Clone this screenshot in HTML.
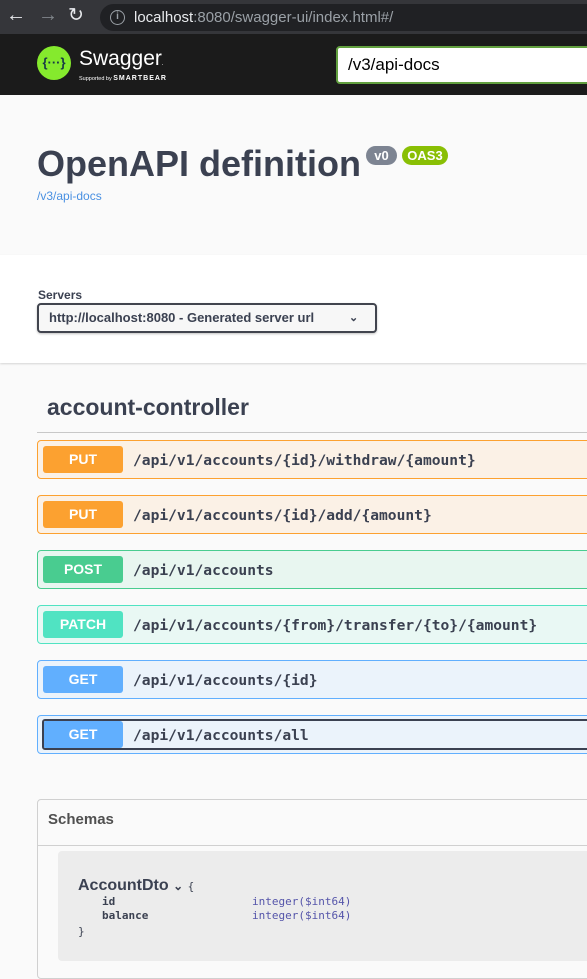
<!DOCTYPE html>
<html><head><meta charset="utf-8"><style>
*{box-sizing:border-box;margin:0;padding:0}
body{width:587px;height:963px;overflow:hidden;background:#fafafa;font-family:"Liberation Sans",sans-serif;position:relative}
.abs{position:absolute}
.chrome{left:0;top:0;width:587px;height:34px;background:#35363a}
.url{left:100px;top:4px;width:500px;height:27px;border-radius:14px;background:#202124;color:#9aa0a6;font-size:15px;line-height:27px;padding-left:34px}
.url b{color:#e8eaed;font-weight:normal}
.top{left:0;top:34px;width:587px;height:61px;background:#1b1b1b}
.info{left:0;top:95px;width:587px;height:160px;background:#fafafa}
.servers{left:0;top:255px;width:587px;height:108px;background:#fff;box-shadow:0 1px 2px rgba(0,0,0,.15)}
.op{position:absolute;left:37px;width:560px;height:39px;border:1px solid;border-radius:4px}
.op .m{position:absolute;left:5px;top:5px;width:80px;height:27px;border-radius:3px;color:#fff;font-weight:bold;font-size:14px;text-align:center;line-height:27px}
.op .p{position:absolute;left:95px;top:1px;line-height:37px;font-family:"DejaVu Sans Mono","Liberation Mono",monospace;font-weight:bold;font-size:14.6px;color:#3b4151}
.put{border-color:#fca130;background:#fbf1e6}.put .m{background:#fca130}
.post{border-color:#49cc90;background:#e8f6f0}.post .m{background:#49cc90}
.patch{border-color:#50e3c2;background:#e9f8f4}.patch .m{background:#50e3c2}
.get{border-color:#61affe;background:#ebf3fb}.get .m{background:#61affe}
.mono{font-family:"DejaVu Sans Mono","Liberation Mono",monospace;font-size:11px;color:#3b4151}
</style></head><body>
<div class="abs chrome"></div>
<div class="abs" style="left:6px;top:4px;color:#e8eaed;font-size:20px">←</div>
<div class="abs" style="left:38px;top:4px;color:#80868b;font-size:20px">→</div>
<div class="abs" style="left:68px;top:4px;color:#e8eaed;font-size:19px">↻</div>
<div class="abs url"><b>localhost</b>:8080/swagger-ui/index.html#/</div>
<div class="abs" style="left:110px;top:10px;width:15px;height:15px;border:1.5px solid #9aa0a6;border-radius:50%;color:#9aa0a6;font-size:10px;text-align:center;line-height:12px;font-weight:bold">i</div>
<div class="abs top"></div>
<div class="abs" style="left:37px;top:46px;width:34px;height:34px;border-radius:50%;background:#85ea2d;color:#173647;font-weight:bold;font-size:13px;text-align:center;line-height:34px">{···}</div>
<div class="abs" style="left:79px;top:47px;color:#fff;font-size:21px">Swagger<span style="font-size:6px">.</span></div>
<div class="abs" style="left:79px;top:75px;color:#fff;font-size:5.5px">Supported by <b style="font-size:7px;letter-spacing:1px">SMARTBEAR</b></div>
<div class="abs" style="left:336px;top:46px;width:260px;height:38px;background:#fff;border:2px solid #62a03f;border-radius:4px 0 0 4px;font-size:17px;line-height:34px;padding-left:10px;color:#000">/v3/api-docs</div>
<div class="abs info"></div>
<div class="abs" style="left:37px;top:143px;font-size:36px;font-weight:bold;color:#3b4151">OpenAPI definition</div>
<div class="abs" style="left:366px;top:146px;width:31px;height:19px;border-radius:10px;background:#7d8492;color:#fff;font-weight:bold;font-size:13px;text-align:center;line-height:19px">v0</div>
<div class="abs" style="left:402px;top:146px;width:46px;height:19px;border-radius:10px;background:#89bf04;color:#fff;font-weight:bold;font-size:13px;text-align:center;line-height:19px">OAS3</div>
<div class="abs" style="left:37px;top:189px;font-size:12px;color:#4990e2">/v3/api-docs</div>
<div class="abs servers"></div>
<div class="abs" style="left:38px;top:288px;font-size:12px;font-weight:bold;color:#3b4151">Servers</div>
<div class="abs" style="left:37px;top:303px;width:340px;height:30px;border:2px solid #41444e;border-radius:4px;background:#f7f7f7;box-shadow:0 1px 2px rgba(0,0,0,.25);font-size:13px;font-weight:bold;color:#3b4151;line-height:26px;padding-left:10px">http://localhost:8080 - Generated server url <span style="position:absolute;left:310px;font-size:11px">⌄</span></div>
<div class="abs" style="left:47px;top:394px;font-size:23px;font-weight:bold;color:#3b4151">account-controller</div>
<div class="abs" style="left:37px;top:432px;width:560px;height:1px;background:#c8c8c8"></div>
<div class="op put" style="top:440px"><div class="m">PUT</div><div class="p">/api/v1/accounts/{id}/withdraw/{amount}</div></div>
<div class="op put" style="top:495px"><div class="m">PUT</div><div class="p">/api/v1/accounts/{id}/add/{amount}</div></div>
<div class="op post" style="top:550px"><div class="m">POST</div><div class="p">/api/v1/accounts</div></div>
<div class="op patch" style="top:605px"><div class="m">PATCH</div><div class="p">/api/v1/accounts/{from}/transfer/{to}/{amount}</div></div>
<div class="op get" style="top:660px"><div class="m">GET</div><div class="p">/api/v1/accounts/{id}</div></div>
<div class="op get" style="top:715px"><div class="m">GET</div><div class="p">/api/v1/accounts/all</div><div style="position:absolute;left:4px;top:3px;width:560px;height:31px;border:2px solid #3b4151;border-radius:3px"></div></div>
<div class="abs" style="left:37px;top:799px;width:570px;height:180px;border:1px solid #d0d0d0;border-radius:4px;background:#fafafa"></div>
<div class="abs" style="left:48px;top:811px;font-size:15px;font-weight:bold;color:#505050">Schemas</div>
<div class="abs" style="left:38px;top:845px;width:560px;height:1px;background:#d0d0d0"></div>
<div class="abs" style="left:58px;top:851px;width:540px;height:110px;border-radius:4px;background:#ececec"></div>
<div class="abs" style="left:78px;top:877px;font-size:16px;font-weight:bold;color:#3b4151">AccountDto <span style="font-size:12px">⌄</span> <span class="mono" style="font-weight:normal">{</span></div>
<div class="abs mono" style="left:102px;top:895px;font-weight:bold">id</div>
<div class="abs mono" style="left:252px;top:895px;color:#55a">integer($int64)</div>
<div class="abs mono" style="left:102px;top:909px;font-weight:bold">balance</div>
<div class="abs mono" style="left:252px;top:909px;color:#55a">integer($int64)</div>
<div class="abs mono" style="left:78px;top:925px">}</div>
</body></html>
